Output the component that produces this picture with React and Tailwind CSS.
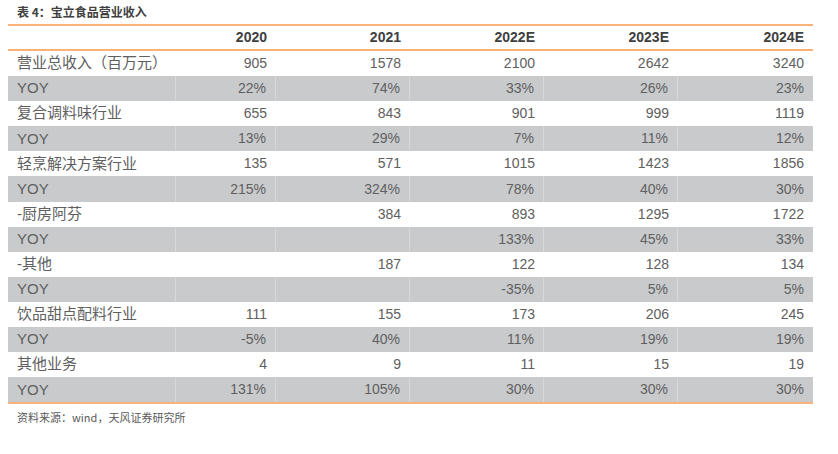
import React from "react";

const rows = [
  { name: "营业总收入（百万元）", vals: ["905", "1578", "2100", "2642", "3240"] },
  { name: "YOY", vals: ["22%", "74%", "33%", "26%", "23%"], yoy: true },
  { name: "复合调料味行业", vals: ["655", "843", "901", "999", "1119"] },
  { name: "YOY", vals: ["13%", "29%", "7%", "11%", "12%"], yoy: true },
  { name: "轻烹解决方案行业", vals: ["135", "571", "1015", "1423", "1856"] },
  { name: "YOY", vals: ["215%", "324%", "78%", "40%", "30%"], yoy: true },
  { name: "-厨房阿芬", vals: ["", "384", "893", "1295", "1722"] },
  { name: "YOY", vals: ["", "", "133%", "45%", "33%"], yoy: true },
  { name: "-其他", vals: ["", "187", "122", "128", "134"] },
  { name: "YOY", vals: ["", "", "-35%", "5%", "5%"], yoy: true },
  { name: "饮品甜点配料行业", vals: ["111", "155", "173", "206", "245"] },
  { name: "YOY", vals: ["-5%", "40%", "11%", "19%", "19%"], yoy: true },
  { name: "其他业务", vals: ["4", "9", "11", "15", "19"] },
  { name: "YOY", vals: ["131%", "105%", "30%", "30%", "30%"], yoy: true },
];

const years = ["2020", "2021", "2022E", "2023E", "2024E"];

const cols = "grid grid-cols-[168px_100px_134px_134px_134px_135px]";

export default function App() {
  return (
    <div className="w-[838px] h-[454px] bg-white text-[#606060]">
      <div className="pl-[17px] pt-[4px] h-[24px] text-[12px] font-bold text-[#404040] leading-[16px] font-['Noto_Sans_CJK_SC',sans-serif]">
        表 4：宝立食品营业收入
      </div>
      <div className="ml-[8px] w-[805px] border-y-2 border-[#f9b27a] font-['Liberation_Sans','Noto_Sans_CJK_SC',sans-serif]">
        <div className={`${cols} h-[25px] border-b-2 border-[#f9b27a] text-[14px] font-bold text-[#404040] items-center`}>
          <div />
          {years.map((y) => (
            <div key={y} className="text-right pr-[9px]">
              {y}
            </div>
          ))}
        </div>
        {rows.map((r, i) => (
          <div
            key={i}
            className={`${cols} h-[25.1px] items-stretch ${r.yoy ? "bg-[#c9cacc]" : "bg-white"}`}
          >
            <div
              className={`pl-[9px] flex items-center text-[15px] ${r.yoy ? "border-r border-[#d8d9db] text-[14px]" : ""}`}
            >
              {r.name}
            </div>
            {r.vals.map((v, j) => (
              <div
                key={j}
                className={`flex items-center justify-end pr-[9px] text-[14px] ${r.yoy && j < 4 ? "border-r border-[#d8d9db]" : ""}`}
              >
                {v}
              </div>
            ))}
          </div>
        ))}
      </div>
      <div className="pl-[17px] pt-[5px] text-[11px] text-[#595959] font-['Noto_Sans_CJK_SC',sans-serif]">
        资料来源：wind，天风证券研究所
      </div>
    </div>
  );
}
